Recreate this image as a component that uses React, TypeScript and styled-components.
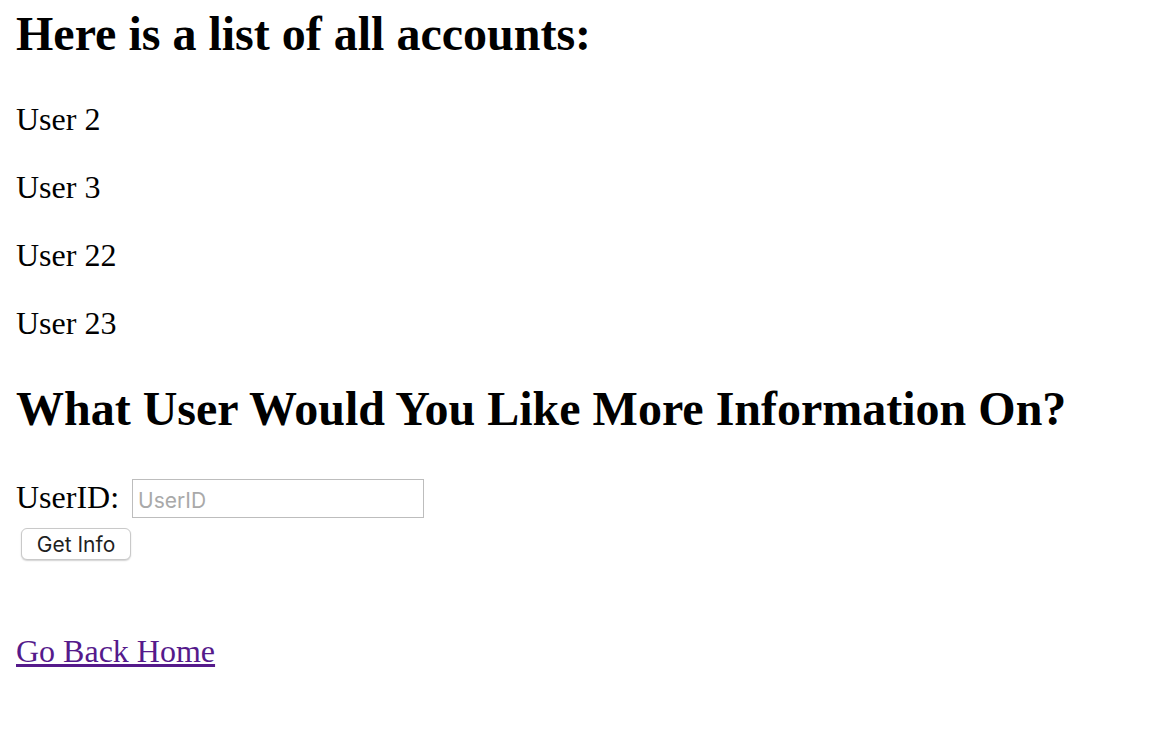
import React from 'react';
import styled, { createGlobalStyle } from 'styled-components';

const GlobalStyle = createGlobalStyle`
  html, body {
    margin: 0;
    padding: 0;
    background: #ffffff;
  }
  body {
    font-family: "Liberation Serif", "Times New Roman", serif;
    font-size: 32px;
    color: #000000;
  }
`;

const Page = styled.div`
  padding: 6px 16px 40px;
`;

const Heading = styled.h2<{ $first?: boolean }>`
  font-size: 48px;
  font-weight: bold;
  line-height: normal;
  margin: ${({ $first }) => ($first ? '0' : '40px')} 0 39.84px;
`;

const Account = styled.p`
  margin: 32px 0;
  line-height: 36px;
`;

const Form = styled.form`
  margin: 0;
  padding-top: 3px;
`;

const FieldRow = styled.div`
  display: flex;
  align-items: baseline;
`;

const Label = styled.label`
  font-size: 32px;
  line-height: normal;
  margin-right: 13px;
`;

const TextInput = styled.input`
  box-sizing: border-box;
  width: 292px;
  height: 39px;
  padding: 3px 5px 0;
  border: 1px solid #bdbdbd;
  border-radius: 0;
  font-family: Inter, "Liberation Sans", sans-serif;
  font-size: 21px;
  color: #000;
  outline: none;

  &::placeholder {
    color: #a9a9a9;
  }
`;

const ButtonRow = styled.div`
  display: flex;
  margin-top: 10px;
`;

const Button = styled.button`
  box-sizing: border-box;
  margin-left: 5px;
  width: 110px;
  height: 32px;
  padding: 0 12px;
  background: #ffffff;
  border: 1px solid #c9c9c9;
  border-radius: 6px;
  box-shadow: 0 1px 1.5px rgba(0, 0, 0, 0.18);
  font-family: Inter, "Liberation Sans", sans-serif;
  font-size: 21px;
  color: #1f1f1f;
  cursor: pointer;
`;

const HomeLink = styled.a`
  display: inline-block;
  margin-top: 73px;
  font-size: 32px;
  line-height: normal;
  color: #551a8b;
  text-decoration: underline;
`;

const accounts = [2, 3, 22, 23];

export default function App() {
  return (
    <Page>
      <GlobalStyle />
      <Heading $first>Here is a list of all accounts:</Heading>
      {accounts.map((id) => (
        <Account key={id}>User {id}</Account>
      ))}
      <Heading>What User Would You Like More Information On?</Heading>
      <Form onSubmit={(e) => e.preventDefault()}>
        <FieldRow>
          <Label htmlFor="userid">UserID:</Label>
          <TextInput id="userid" type="text" placeholder="UserID" />
        </FieldRow>
        <ButtonRow>
          <Button type="submit">Get Info</Button>
        </ButtonRow>
      </Form>
      <HomeLink href="#">Go Back Home</HomeLink>
    </Page>
  );
}
